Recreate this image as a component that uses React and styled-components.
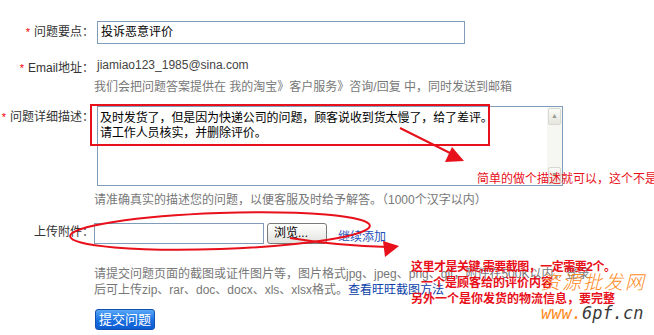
import React from "react";
import styled, { createGlobalStyle } from "styled-components";

const GlobalStyle = createGlobalStyle`
  html, body {
    margin: 0;
    padding: 0;
    background: #fff;
  }
  body {
    font-family: "Liberation Sans", "Noto Sans CJK SC", sans-serif;
    font-size: 12px;
    color: #333;
  }
`;

const Page = styled.div`
  position: relative;
  width: 654px;
  height: 335px;
  overflow: hidden;
  padding-top: 21px;
  box-sizing: border-box;
`;

const Row = styled.div`
  display: flex;
  align-items: flex-start;
  margin-top: ${(p) => p.$top || 0}px;
`;

const Label = styled.div`
  width: 94px;
  flex-shrink: 0;
  text-align: right;
  white-space: nowrap;
  font-size: 12px;
  color: #333;
  line-height: 16px;
  padding-top: ${(p) => p.$pad || 0}px;
`;

const Star = styled.span`
  color: #e00;
  font-size: 11px;
  margin-right: 4px;
`;

const Field = styled.div`
  display: flex;
  flex-direction: column;
`;

const TextInput = styled.div`
  box-sizing: border-box;
  margin-left: 3px;
  width: ${(p) => p.$w}px;
  height: ${(p) => p.$h}px;
  border: 1px solid #7f9db9;
  background: #fff;
  color: #000;
  font-size: 12px;
  line-height: 20px;
  padding-left: 3px;
`;

const Value = styled.div`
  margin-left: 3px;
  line-height: 16px;
  color: #444;
  font-family: "Liberation Sans", sans-serif;
  font-size: 12px;
`;

const Hint = styled.div`
  line-height: 16px;
  color: #777;
  white-space: nowrap;
  margin-top: ${(p) => p.$top || 0}px;
`;

const TextArea = styled.div`
  box-sizing: border-box;
  margin-left: 3px;
  width: 466px;
  height: 80px;
  border: 1px solid #7f9db9;
  display: flex;
  background: #fff;
`;

const AreaText = styled.div`
  flex: 1;
  color: #000;
  padding: 4px 0 0 2px;
  line-height: 15px;
  letter-spacing: -0.1px;
`;

const Scroll = styled.div`
  width: 15px;
  background: #f6f6f2;
  display: flex;
  flex-direction: column;
  justify-content: space-between;
  padding: 1px 0;
`;

const ScrollBtn = styled.div`
  height: 15px;
  margin: 0 1px;
  border: 1px solid #d8d8d0;
  border-radius: 2px;
  background: linear-gradient(#fbfbf8, #e6e6de);
  color: #9a9a90;
  font-size: 7px;
  line-height: 14px;
  text-align: center;
`;

const UploadLine = styled.div`
  display: flex;
  align-items: center;
`;

const BrowseButton = styled.div`
  box-sizing: border-box;
  margin-left: 3px;
  width: 60px;
  height: 21px;
  border: 1px solid #7a7a7a;
  border-radius: 3px;
  background: linear-gradient(#ffffff, #e3e3de);
  color: #000;
  font-size: 12px;
  line-height: 19px;
  padding-left: 6px;
`;

const BlueLink = styled.a`
  color: ${(p) => p.$color || "#0b3fa8"};
  text-decoration: none;
  margin-left: ${(p) => p.$left || 0}px;
  padding-top: ${(p) => p.$dropped || 0}px;
`;

const SubmitButton = styled.div`
  box-sizing: border-box;
  margin-left: 1px;
  width: 60px;
  height: 21px;
  border: 1px solid #1250b0;
  border-radius: 3px;
  background: linear-gradient(#58a8f8, #1a6fe0 55%, #0c5bd2);
  color: #fff;
  font-size: 13px;
  line-height: 19px;
  text-align: center;
`;

const Marks = styled.svg`
  position: absolute;
  left: 0;
  top: 0;
  pointer-events: none;
`;

const Note = styled.div`
  position: absolute;
  left: ${(p) => p.$x}px;
  top: ${(p) => p.$y}px;
  color: #e8101a;
  font-size: 12px;
  line-height: 16px;
  white-space: nowrap;
  font-weight: ${(p) => (p.$bold ? 700 : 400)};
`;

const NoteLine = styled.div`
  padding-left: ${(p) => p.$indent || 0}px;
  letter-spacing: ${(p) => p.$tight || 0}px;
`;

const Stamp = styled.div`
  position: absolute;
  left: 541px;
  top: 270px;
  color: #ff8a1c;
  white-space: nowrap;
`;

const StampName = styled.div`
  font-size: 19px;
  font-weight: 300;
  letter-spacing: 2px;
  line-height: 26px;
  font-style: italic;
`;

const StampUrl = styled.div`
  font-family: "DejaVu Sans Mono", monospace;
  font-style: italic;
  font-size: 17px;
  line-height: 22px;
  margin-top: 6px;
  span {
    color: #3a3a3a;
  }
`;

export default function App() {
  return (
    <Page>
      <GlobalStyle />

      <Row>
        <Label style={{ lineHeight: "23px" }}>
          <Star>*</Star>问题要点：
        </Label>
        <TextInput $w={368} $h={23}>
          投诉恶意评价
        </TextInput>
      </Row>

      <Row $top={13}>
        <Label $pad={3}>
          <Star>*</Star>Email地址：
        </Label>
        <Field>
          <Value>jiamiao123_1985@sina.com</Value>
          <Hint $top={6}>
            我们会把问题答案提供在 我的淘宝》客户服务》咨询/回复 中，同时发送到邮箱
          </Hint>
        </Field>
      </Row>

      <Row $top={11}>
        <Label $pad={3}>
          <Star>*</Star>问题详细描述：
        </Label>
        <Field>
          <TextArea>
            <AreaText>
              及时发货了，但是因为快递公司的问题，顾客说收到货太慢了，给了差评。
              <br />
              请工作人员核实，并删除评价。
            </AreaText>
            <Scroll>
              <ScrollBtn>▲</ScrollBtn>
              <ScrollBtn>▼</ScrollBtn>
            </Scroll>
          </TextArea>
          <Hint $top={6}>
            请准确真实的描述您的问题，以便客服及时给予解答。（1000个汉字以内）
          </Hint>
        </Field>
      </Row>

      <Row $top={14}>
        <Label style={{ lineHeight: "20px" }}>上传附件：</Label>
        <Field>
          <UploadLine>
            <TextInput $w={170} $h={21} style={{ marginLeft: 0 }} />
            <BrowseButton>浏览...</BrowseButton>
            <BlueLink $color="#1d4fb8" $left={11} $dropped={5}>
              继续添加
            </BlueLink>
          </UploadLine>
          <Hint $top={22}>
            请提交问题页面的截图或证件图片等，图片格式jpg、jpeg、png、gif，附件在500K以内，登录
          </Hint>
          <Hint>
            后可上传zip、rar、doc、docx、xls、xlsx格式。
            <BlueLink>查看旺旺截图方法</BlueLink>
          </Hint>
          <Row $top={11}>
            <SubmitButton>提交问题</SubmitButton>
          </Row>
        </Field>
      </Row>

      <Marks width="654" height="335" viewBox="0 0 654 335">
        <rect x="91" y="105" width="398" height="40" fill="none" stroke="#e8101a" strokeWidth="2" />
        <line x1="400" y1="128" x2="452" y2="154" stroke="#e8101a" strokeWidth="2" />
        <polygon points="452,147 464,161 445,162" fill="#e8101a" />
        <ellipse cx="220" cy="231" rx="150" ry="18" transform="rotate(-2 220 231)" fill="none" stroke="#e8101a" strokeWidth="2" />
        <path d="M 290 238 Q 340 246 388 247" fill="none" stroke="#e8101a" strokeWidth="2" />
        <polygon points="383,241 399,246 385,257" fill="#e8101a" />
      </Marks>

      <Note $x={477} $y={171}>简单的做个描述就可以，这个不是</Note>

      <Note $x={411} $y={259} $bold>
        <NoteLine $tight={-0.5}>这里才是关键,需要截图，一定需要2个。</NoteLine>
        <NoteLine $indent={10}>一个是顾客给的评价内容</NoteLine>
        <NoteLine>另外一个是你发货的物流信息，要完整</NoteLine>
      </Note>

      <Stamp>
        <StampName>资源批发网</StampName>
        <StampUrl>
          www.<span>6pf.cn</span>
        </StampUrl>
      </Stamp>
    </Page>
  );
}
